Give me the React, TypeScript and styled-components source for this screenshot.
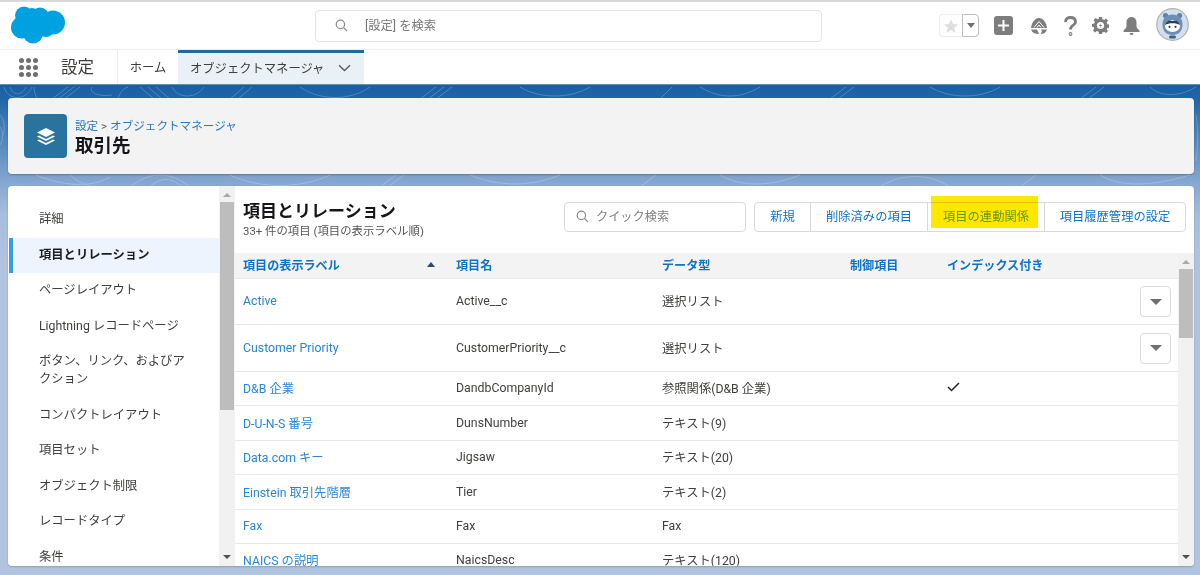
import React from 'react';
import styled, {createGlobalStyle} from 'styled-components';

const Global = createGlobalStyle`
  html, body { margin: 0; padding: 0; }
  body {
    font-family: Roboto, "Noto Sans CJK JP", sans-serif;
    font-size: 12.3px;
    color: #3e3e3c;
  }
  * { box-sizing: border-box; }
`

const Page = styled.div`
  position: relative;
  width: 1200px;
  height: 575px;
  overflow: hidden;
  display: flex;
  flex-direction: column;
  background: #fff;
  border-top: 2px solid #d8d8d8;
`

const Header = styled.header`
  height: 48px;
  flex: none;
  display: flex;
  align-items: center;
  padding-left: 11px;
  border-bottom: 1px solid #ececec;
`

const GlobalSearch = styled.div`
  width: 507px;
  height: 32px;
  margin-left: 249px;
  display: flex;
  align-items: center;
  gap: 17px;
  padding: 0 0 1px 19px;
  border: 1px solid #e4e4e4;
  border-radius: 4px;
  color: #777;
`

const HeaderIcons = styled.div`
  display: flex;
  align-items: center;
  margin-left: 117px;
`

const FavGroup = styled.div`
  width: 40px;
  height: 23px;
  display: flex;
  margin-right: 15px;
`

const FavStar = styled.div`
  width: 23px;
  display: flex;
  align-items: center;
  justify-content: center;
  border: 1px solid #ececec;
  border-right: none;
  border-radius: 4px 0 0 4px;
`

const FavMore = styled.div`
  width: 17px;
  display: flex;
  align-items: center;
  justify-content: center;
  border: 1px solid #bdbdbd;
  border-radius: 0 4px 4px 0;
`

const IconSlot = styled.div<{$w: number; $mr: number}>`
  width: ${p => p.$w}px;
  margin-right: ${p => p.$mr}px;
  display: flex;
  align-items: center;
  justify-content: center;
`

const AvatarSlot = styled.div`
  display: flex;
  margin: -3px 0 0 -1px;
`

const Nav = styled.nav`
  height: 34px;
  flex: none;
  display: flex;
  align-items: stretch;
  padding-left: 19px;
`

const Launcher = styled.div`
  display: grid;
  grid-template-columns: repeat(3, 5px);
  gap: 2px;
  align-content: center;
`

const Dot = styled.span`
  width: 5px;
  height: 5px;
  border-radius: 50%;
  background: #6f6f6f;
`

const AppName = styled.div`
  width: 80px;
  padding-left: 23px;
  font-size: 16.5px;
  line-height: 36px;
  color: #3e3e3c;
  border-right: 1px solid #ececec;
`

const NavLink = styled.div`
  width: 60px;
  text-align: center;
  line-height: 37px;
`

const ActiveTab = styled.div`
  width: 186px;
  display: flex;
  align-items: center;
  justify-content: space-between;
  padding: 0 13px 2px 12px;
  background: #eaf1f6;
  border-top: 3px solid #1f6a9e;
`

const Body = styled.main`
  position: relative;
  flex: 1;
  min-height: 0;
  padding: 13px 6px 9px 8px;
  display: flex;
  flex-direction: column;
  gap: 12px;
  background: linear-gradient(#1a5ea4 0, #2166a8 14px, #7fa3cf 92px, #a6bedd 130px, #b0c4df 180px);
  border-top: 1px solid #5b93ad;
`

const Topo = styled.svg`
  position: absolute;
  left: 0;
  top: 0;
  width: 1200px;
  height: 120px;
  fill: none;
  stroke: #fff;
  stroke-width: 1;
  opacity: .22;
`

const TitleCard = styled.section`
  position: relative;
  height: 76px;
  flex: none;
  display: flex;
  align-items: center;
  padding-left: 16px;
  gap: 8px;
  background: #f3f3f3;
  border-radius: 4px;
  box-shadow: 0 1px 2px rgba(0, 0, 0, .25);
`

const ObjectIcon = styled.div`
  width: 43px;
  height: 44px;
  display: flex;
  align-items: center;
  justify-content: center;
  background: #2a739e;
  border-radius: 4px;
`

const Crumb = styled.div`
  font-size: 11.6px;
  line-height: 16px;
  margin-top: 3px;
  color: #555;
`

const CrumbLink = styled.span`
  color: #2a78b8;
`

const ObjectName = styled.div`
  font-size: 18.5px;
  font-weight: 700;
  line-height: 24px;
  color: #16161a;
`

const MainCard = styled.section`
  position: relative;
  flex: 1;
  min-height: 0;
  display: flex;
  background: #fff;
  border-radius: 4px;
  overflow: hidden;
  box-shadow: 0 1px 2px rgba(0, 0, 0, .2);
`

const Sidebar = styled.aside`
  width: 211px;
  flex: none;
  padding: 16px 0 0 1px;
  overflow: hidden;
`

const SideItem = styled.div<{$active?: boolean}>`
  padding: 9px 30px 9px ${p => p.$active ? 26 : 30}px;
  line-height: 17.6px;
  font-weight: ${p => p.$active ? 700 : 400};
  color: ${p => p.$active ? '#1c1c1e' : '#3e3e3c'};
  background: ${p => p.$active ? '#edf4fe' : 'transparent'};
  border-left: ${p => p.$active ? '4px solid #3a9be8' : 'none'};
`

const Scrollbar = styled.div`
  width: 16px;
  flex: none;
  display: flex;
  flex-direction: column;
  align-items: center;
  background: #f1f1f1;
  &::before {
    content: "";
    margin-top: 7px;
    border: 4px solid transparent;
    border-top: none;
    border-bottom: 4px solid #a8a8a8;
  }
  &::after {
    content: "";
    margin-top: auto;
    margin-bottom: 7px;
    border: 4px solid transparent;
    border-bottom: none;
    border-top: 4px solid #505050;
  }
`

const Thumb = styled.div<{$h: number}>`
  width: 14px;
  height: ${p => p.$h}px;
  margin-top: 5px;
  background: #bdbdbd;
`

const Content = styled.div`
  flex: 1;
  min-width: 0;
  display: flex;
  flex-direction: column;
`

const Toolbar = styled.div`
  height: 67px;
  flex: none;
  display: flex;
  align-items: flex-start;
  padding: 16px 8px 0 8px;
`

const ListTitle = styled.div`
  flex: 1;
`

const ListName = styled.div`
  font-size: 17px;
  font-weight: 700;
  line-height: 19px;
  color: #16161a;
`

const ListCount = styled.div`
  font-size: 11.4px;
  line-height: 16px;
  margin-top: 2px;
  color: #555;
`

const QuickFind = styled.div`
  width: 182px;
  height: 30px;
  display: flex;
  align-items: center;
  gap: 7px;
  padding: 0 0 2px 11px;
  margin-right: 8px;
  color: #808080;
  font-size: 12.2px;
  border: 1px solid #d8d8d8;
  border-radius: 4px;
`

const ButtonGroup = styled.div`
  display: flex;
  height: 30px;
  border: 1px solid #d8d8d8;
  border-radius: 4px;
`

const GroupButton = styled.div<{$w: number; $marked?: boolean}>`
  width: ${p => p.$w}px;
  display: flex;
  align-items: center;
  justify-content: center;
  padding-bottom: 2px;
  color: ${p => p.$marked ? '#6aa5c4' : '#0f72c9'};
  & + & { border-left: 1px solid #d8d8d8; }
`

const Marker = styled.div`
  position: absolute;
  left: 931px;
  top: 194px;
  width: 107px;
  height: 32px;
  background: #ffe800;
  mix-blend-mode: multiply;
`

const TableWrap = styled.div`
  flex: 1;
  min-height: 0;
  display: flex;
`

const TableArea = styled.div`
  flex: 1;
  min-width: 0;
  overflow: hidden;
`

const Row = styled.div<{$h: number; $head?: boolean}>`
  height: ${p => p.$h}px;
  display: grid;
  grid-template-columns: 213px 206px 188px 97px 193px 38px;
  align-items: center;
  padding-left: 8px;
  background: ${p => p.$head ? '#f3f3f3' : 'transparent'};
  border-bottom: 1px solid #e9e9e9;
`

const HeadCell = styled.div`
  display: flex;
  justify-content: space-between;
  padding: 0 21px 3px 0;
  font-size: 12.1px;
  font-weight: 700;
  color: #0f72c9;
`

const LabelLink = styled.div`
  color: #2a85d8;
  padding-bottom: 1px;
`

const Cell = styled.div`
  color: #3e3e3c;
  padding-bottom: 1px;
`

const RowMenu = styled.div`
  width: 31px;
  height: 31px;
  display: flex;
  align-items: center;
  justify-content: center;
  margin-top: 1px;
  border: 1px solid #dcdcdc;
  border-radius: 4px;
  &::after {
    content: "";
    border: 6px solid transparent;
    border-bottom: none;
    border-top: 6px solid #6f6f6f;
  }
`

const SmallCaret = styled.span`
  border: 4px solid transparent;
  border-bottom: none;
  border-top: 5px solid #6f6f6f;
`

const SortArrow = styled.span`
  align-self: center;
  border: 4px solid transparent;
  border-top: none;
  border-bottom: 5px solid #2a4a72;
`

const sideItems = [
  '詳細', '項目とリレーション', 'ページレイアウト', 'Lightning レコードページ',
  'ボタン、リンク、およびアクション', 'コンパクトレイアウト', '項目セット',
  'オブジェクト制限', 'レコードタイプ', '条件',
]

const columns = ['項目の表示ラベル', '項目名', 'データ型', '制御項目', 'インデックス付き']

const fields = [
  {label: 'Active', name: 'Active__c', type: '選択リスト', h: 46, menu: true},
  {label: 'Customer Priority', name: 'CustomerPriority__c', type: '選択リスト', h: 47, menu: true},
  {label: 'D&B 企業', name: 'DandbCompanyId', type: '参照関係(D&B 企業)', h: 34, indexed: true},
  {label: 'D-U-N-S 番号', name: 'DunsNumber', type: 'テキスト(9)', h: 35},
  {label: 'Data.com キー', name: 'Jigsaw', type: 'テキスト(20)', h: 34},
  {label: 'Einstein 取引先階層', name: 'Tier', type: 'テキスト(2)', h: 35},
  {label: 'Fax', name: 'Fax', type: 'Fax', h: 34},
  {label: 'NAICS の説明', name: 'NaicsDesc', type: 'テキスト(120)', h: 34},
]

const topoLines = [
  'M4 2C8 16 26 16 32 2', 'M10 2C13 11 22 11 26 2', 'M34 2C34 8 36 12 38 14', 'M52 14 68 2', 'M58 14 74 2', 'M64 14 80 2',
  'M92 2C88 8 100 12 112 10', 'M118 14C120 8 122 4 128 2', 'M140 2 154 14', 'M148 2 162 14', 'M156 2 170 14', 'M172 2C178 14 196 14 204 2',
  'M230 14 244 2', 'M238 14 252 2', 'M300 2C320 16 350 16 370 2', 'M420 14 436 2', 'M428 14 444 2', 'M436 14 452 2',
  'M520 2C540 14 570 14 590 2', 'M660 14 672 2', 'M700 2C720 14 740 14 760 2', 'M830 14 846 2', 'M838 14 854 2', 'M930 2C950 14 980 14 1000 2', 'M1080 14 1096 2', 'M1088 14 1104 2', 'M1150 2C1160 12 1180 12 1196 2',
  'M36 90C60 100 90 104 110 92', 'M70 90C80 98 84 100 96 102', 'M130 102C150 86 170 86 190 102', 'M150 102C160 92 172 92 182 102', 'M230 90C260 104 300 104 330 90', 'M380 102 396 90', 'M388 102 404 90', 'M470 90C500 102 530 102 560 90', 'M640 102 656 90', 'M720 90C740 102 770 102 800 90', 'M880 102C900 88 930 88 950 102', 'M1020 102 1036 90', 'M1100 90C1120 102 1150 102 1190 90',
  'M0 30C4 34 6 44 2 52', 'M0 42C3 46 4 54 0 60', 'M1196 30C1198 44 1198 60 1196 76',
]

const Cloud = () => (
  <svg width="55" height="39" viewBox="0 0 55 39" fill="#00a1e0">
    <circle cx="13" cy="9.500" r="9" />
    <circle cx="21" cy="9" r="7" />
    <circle cx="29" cy="10.500" r="9" />
    <circle cx="42" cy="16.500" r="12" />
    <circle cx="11" cy="21.500" r="11" />
    <circle cx="22" cy="27.500" r="10" />
    <circle cx="35" cy="23" r="8" />
    <rect x="13" y="10" width="26" height="16" />
  </svg>
)

const Layers = () => (
  <svg width="20" height="19" viewBox="0 0 20 19" fill="#fff">
    <path d="M10 1 19 5.500 10 10 1 5.500Z" />
    <path d="M3 8.600 10 12.100 17 8.600 19 9.600 10 14.100 1 9.600Z" />
    <path d="M3 12.600 10 16.100 17 12.600 19 13.600 10 18.100 1 13.600Z" />
  </svg>
)

const SearchGlyph = ({size}: {size: number}) => (
  <svg width={size} height={size} viewBox="0 0 14 14" fill="none" stroke="#8a8a8a" strokeWidth="1.300">
    <circle cx="5.800" cy="5.800" r="4.500" />
    <path d="M9.200 9.200 13 13" />
  </svg>
)

const Avatar = () => (
  <svg width="33" height="33" viewBox="0 0 33 33">
    <circle cx="16.500" cy="16.500" r="15.800" fill="#d3dfee" stroke="#b0b0b0" strokeWidth="1.200" />
    <circle cx="9.500" cy="7.500" r="2.600" fill="#5f82ad" />
    <circle cx="23.500" cy="7.500" r="2.600" fill="#5f82ad" />
    <path d="M6.500 16.500C6.500 10 10.500 6.500 16.500 6.500S26.500 10 26.500 16.500 22.500 27 16.500 27 6.500 23 6.500 16.500Z" fill="#6c8fba" />
    <ellipse cx="16.500" cy="18" rx="7.600" ry="6" fill="#fff" />
    <path d="M9 17C10 13 13.500 11.500 16.500 13 19.500 11.500 23 13 24 17 20.500 14.500 12.500 14.500 9 17Z" fill="#2c3e58" />
    <circle cx="13.500" cy="18.800" r="1.100" fill="#2c3e58" />
    <circle cx="19.500" cy="18.800" r="1.100" fill="#2c3e58" />
    <rect x="13" y="27.500" width="7" height="3" rx="1.500" fill="#3f5f8a" />
  </svg>
)

export default function App() {
  return (
    <Page>
      <Global />
      <Header>
        <Cloud />
        <GlobalSearch>
          <SearchGlyph size={13} />
          <span>[設定] を検索</span>
        </GlobalSearch>
        <HeaderIcons>
          <FavGroup>
            <FavStar>
              <svg width="16" height="16" viewBox="0 0 24 24" fill="#dedede">
                <path d="M12 2l3 7 7.500.7-5.700 5 1.800 7.300L12 18l-6.600 4 1.800-7.300-5.700-5L9 9z" />
              </svg>
            </FavStar>
            <FavMore><SmallCaret /></FavMore>
          </FavGroup>
          <IconSlot $w={19} $mr={17}>
            <svg width="19" height="19" viewBox="0 0 19 19">
              <rect width="19" height="19" rx="3" fill="#7d7d7d" />
              <path d="M9.500 4v11M4 9.500h11" stroke="#fff" strokeWidth="2" />
            </svg>
          </IconSlot>
          <IconSlot $w={18} $mr={16}>
            <svg width="18" height="18" viewBox="0 0 18 18" fill="#7d7d7d">
              <path d="M9 1C5 1 1.600 5.500 1 11h16C16.400 5.500 13 1 9 1Z" />
              <path d="M1 12.500h6l2 4.500C5 17 2 15.500 1 12.500ZM11 12.500h6c-1 3-3 4.500-6.500 4.500l1.500-2.500Z" />
              <path d="M4 10.500 9 4.500l5 6M7 10.500 9 8l2 2.500" fill="none" stroke="#fff" strokeWidth="1" />
            </svg>
          </IconSlot>
          <IconSlot $w={13} $mr={15}>
            <svg width="13" height="20" viewBox="0 0 13 20" fill="none" stroke="#7d7d7d" strokeWidth="2.800">
              <path d="M1.500 6C1.500 3 3.500 1.500 6.500 1.500S11.500 3 11.500 6C11.500 9.500 6.500 9 6.500 13.500" />
              <circle cx="6.500" cy="18" r=".5" fill="#7d7d7d" />
            </svg>
          </IconSlot>
          <IconSlot $w={17} $mr={14}>
            <svg width="17" height="17" viewBox="0 0 17 17" fill="#7d7d7d">
              <path d="M7 0h3l.4 2.200 1.700.7L14 1.600l2 2-1.300 1.900.7 1.700 2.200.4v3l-2.200.4-.7 1.700L16 14l-2 2-1.900-1.300-1.700.7L10 17H7l-.4-2.200-1.700-.7L3 15.400l-2-2 1.300-1.900-.7-1.700L0 10V7l2.200-.4.7-1.700L1.600 3l2-2 1.900 1.300 1.100-.4Z" />
              <circle cx="8.500" cy="8.500" r="3.600" fill="#fff" />
              <path d="M9.200 5.800 7 9h1.600l-.8 2.400L10 8H8.400Z" />
            </svg>
          </IconSlot>
          <IconSlot $w={17} $mr={17}>
            <svg width="17" height="18" viewBox="0 0 17 18" fill="#7d7d7d">
              <path d="M8.500 0C5.500 0 3.500 2.400 3.500 5.500V9C3.500 11 2 12 .5 13.500V15h16v-1.500C15 12 13.500 11 13.500 9V5.500C13.500 2.400 11.500 0 8.500 0Z" />
              <path d="M6.500 16h4a2 2 0 0 1-4 0Z" />
            </svg>
          </IconSlot>
          <AvatarSlot><Avatar /></AvatarSlot>
        </HeaderIcons>
      </Header>
      <Nav>
        <Launcher>
          {Array.from({length: 9}, (_, i) => <Dot key={i} />)}
        </Launcher>
        <AppName>設定</AppName>
        <NavLink>ホーム</NavLink>
        <ActiveTab>
          <span>オブジェクトマネージャ</span>
          <svg width="13" height="8" viewBox="0 0 13 8" fill="none" stroke="#5c5c5c" strokeWidth="1.400">
            <path d="M1 1.200 6.500 6.500 12 1.200" />
          </svg>
        </ActiveTab>
      </Nav>
      <Body>
        <Topo viewBox="0 0 1200 120">
          {topoLines.map(d => <path key={d} d={d} />)}
        </Topo>
        <TitleCard>
          <ObjectIcon><Layers /></ObjectIcon>
          <div>
            <Crumb><CrumbLink>設定</CrumbLink> &gt; <CrumbLink>オブジェクトマネージャ</CrumbLink></Crumb>
            <ObjectName>取引先</ObjectName>
          </div>
        </TitleCard>
        <MainCard>
          <Sidebar>
            {sideItems.map((item, i) => (
              <SideItem key={item} $active={i === 1}>{item}</SideItem>
            ))}
          </Sidebar>
          <Scrollbar><Thumb $h={208} /></Scrollbar>
          <Content>
            <Toolbar>
              <ListTitle>
                <ListName>項目とリレーション</ListName>
                <ListCount>33+ 件の項目 (項目の表示ラベル順)</ListCount>
              </ListTitle>
              <QuickFind>
                <SearchGlyph size={13} />
                <span>クイック検索</span>
              </QuickFind>
              <ButtonGroup>
                <GroupButton $w={55}>新規</GroupButton>
                <GroupButton $w={117}>削除済みの項目</GroupButton>
                <GroupButton $w={117} $marked>項目の連動関係</GroupButton>
                <GroupButton $w={141}>項目履歴管理の設定</GroupButton>
              </ButtonGroup>
            </Toolbar>
            <TableWrap>
              <TableArea>
                <Row $h={26} $head>
                  {columns.map((col, i) => (
                    <HeadCell key={col}>{col}{i === 0 && <SortArrow />}</HeadCell>
                  ))}
                </Row>
                {fields.map(f => (
                  <Row key={f.name} $h={f.h}>
                    <LabelLink>{f.label}</LabelLink>
                    <Cell>{f.name}</Cell>
                    <Cell>{f.type}</Cell>
                    <Cell />
                    <Cell>
                      {f.indexed && (
                        <svg width="13" height="10" viewBox="0 0 13 10" fill="none" stroke="#222" strokeWidth="1.500">
                          <path d="M1 5l3.500 3.500L12 1" />
                        </svg>
                      )}
                    </Cell>
                    <Cell>{f.menu && <RowMenu />}</Cell>
                  </Row>
                ))}
              </TableArea>
              <Scrollbar><Thumb $h={69} /></Scrollbar>
            </TableWrap>
          </Content>
        </MainCard>
      </Body>
      <Marker />
    </Page>
  )
}
